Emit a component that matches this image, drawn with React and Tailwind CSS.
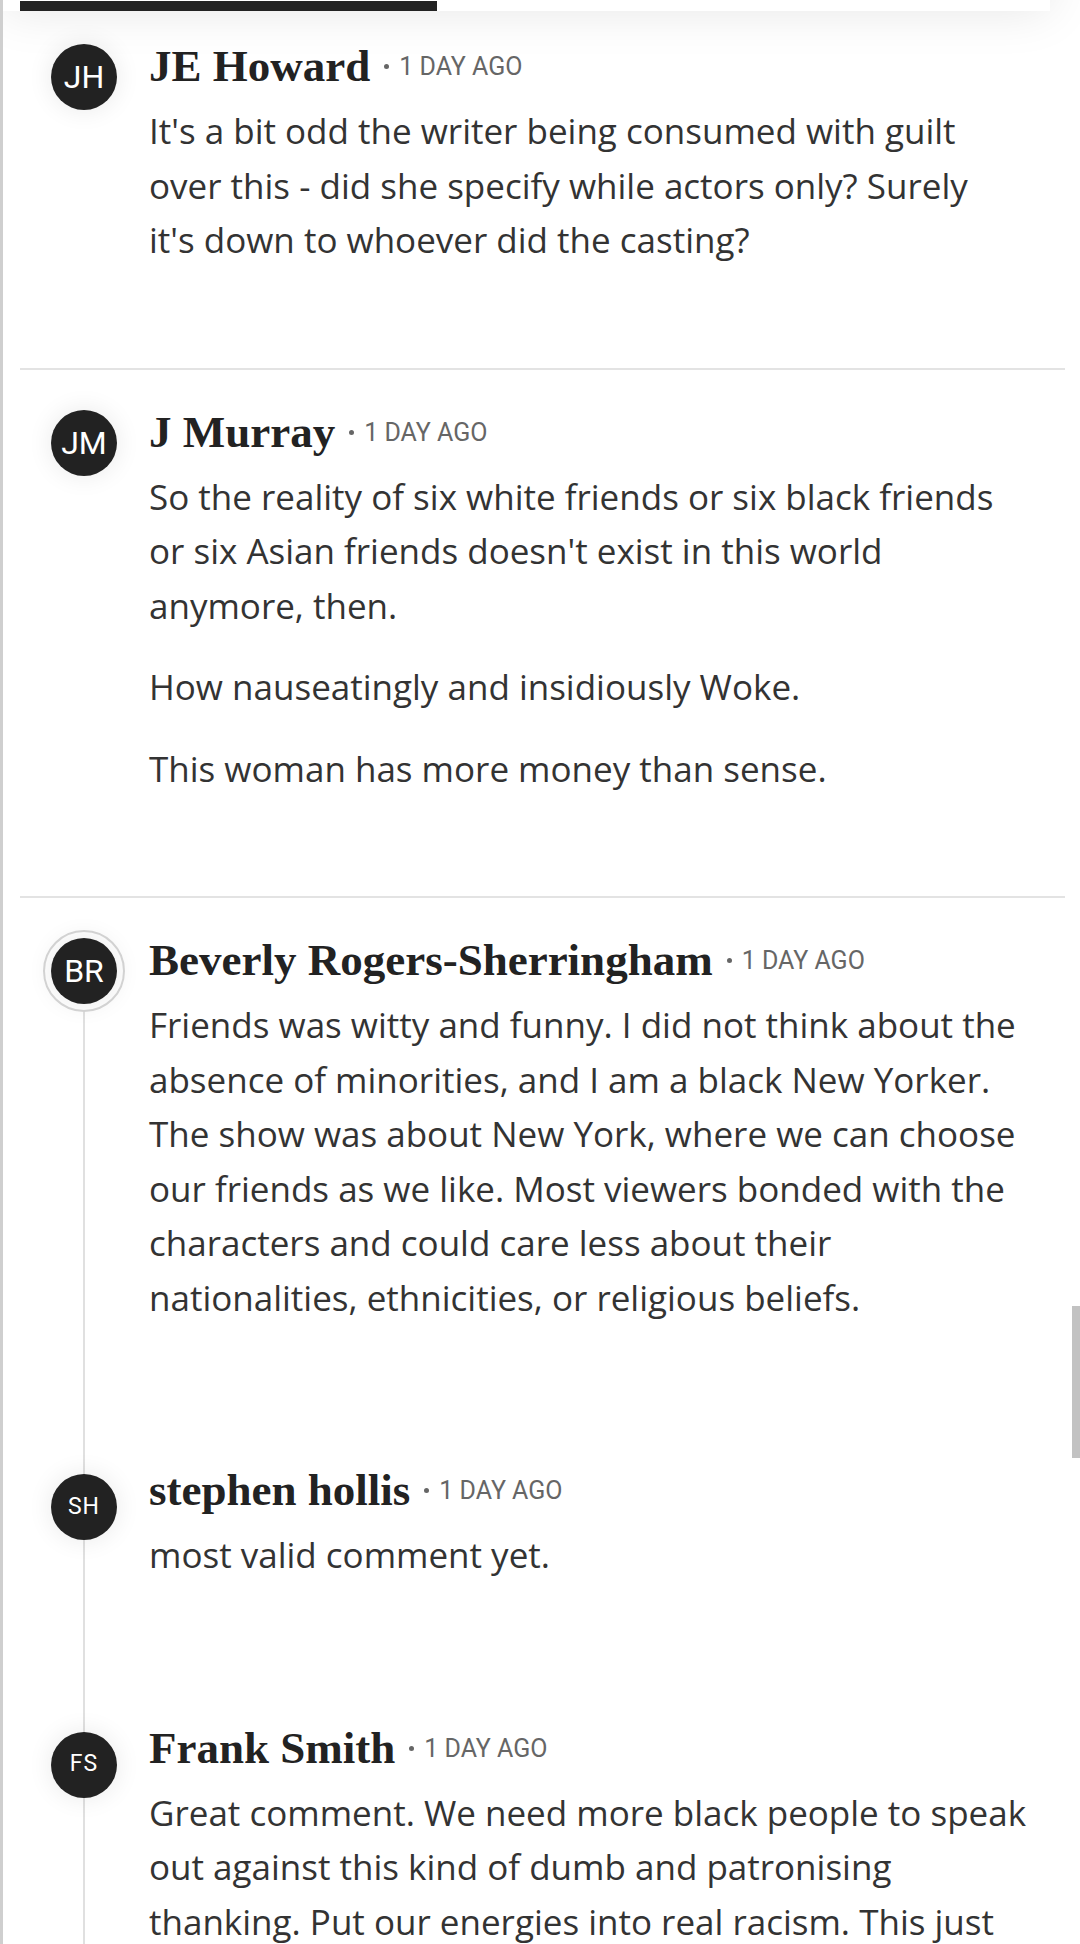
import React from 'react';

const serif = { fontFamily: '"Liberation Serif", "Times New Roman", serif' };

const threads = [
  {
    id: 1,
    initials: 'JH',
    name: 'JE Howard',
    time: '1 day ago',
    body: [
      "It's a bit odd the writer being consumed with guilt over this - did she specify while actors only? Surely\nit's down to whoever did the casting?",
    ],
  },
  {
    id: 2,
    initials: 'JM',
    name: 'J Murray',
    time: '1 day ago',
    body: [
      "So the reality of six white friends or six black friends or six Asian friends doesn't exist in this world anymore, then.",
      'How nauseatingly and insidiously Woke.',
      'This woman has more money than sense.',
    ],
  },
  {
    id: 3,
    initials: 'BR',
    name: 'Beverly Rogers-Sherringham',
    time: '1 day ago',
    body: [
      'Friends was witty and funny. I did not think about the absence of minorities, and I am a black New Yorker. The show was about New York, where we can choose our friends as we like. Most viewers bonded with the characters and could care less about their nationalities, ethnicities, or religious beliefs.',
    ],
    replies: [
      {
        id: 31,
        initials: 'SH',
        name: 'stephen hollis',
        time: '1 day ago',
        body: ['most valid comment yet.'],
      },
      {
        id: 32,
        initials: 'FS',
        name: 'Frank Smith',
        time: '1 day ago',
        body: [
          'Great comment. We need more black people to speak out against this kind of dumb and patronising thanking. Put our energies into real racism. This just plays into the hands of those who want to divide us.',
        ],
      },
    ],
  },
];

function Avatar({ initials, reply, ring }) {
  return (
    <div
      className={
        'relative flex h-[66px] w-[66px] shrink-0 items-center justify-center rounded-full bg-[#222] text-white shadow-[0_0_26px_rgba(0,0,0,0.09)] ' +
        (reply ? 'mt-[10px] text-[23px] tracking-[1px]' : 'mt-[4px] text-[32px]') +
        (ring ? ' outline-2 outline-offset-[6px] outline-[#d2d2d2]' : '')
      }
      style={{ fontFamily: 'Roboto, "Liberation Sans", sans-serif' }}
    >
      {initials}
    </div>
  );
}

function Comment({ c, reply, ring }) {
  return (
    <div className="flex pl-[31px] pr-[35px]">
      <Avatar initials={c.initials} reply={reply} ring={ring} />
      <div className="ml-[32px] min-w-0 flex-1">
        <div className="flex h-[53px] items-center">
          <span className="text-[45px] font-bold leading-[53px] text-[#222]" style={serif}>
            {c.name}
          </span>
          <span className="ml-[14px] h-[5px] w-[5px] rounded-full bg-[#666]" />
          <span
            className="ml-[10px] text-[25px] uppercase leading-[29px] text-[#666]"
            style={{ fontFamily: 'Roboto, "Liberation Sans", sans-serif' }}
          >
            {c.time}
          </span>
        </div>
        <div className="mt-[11px] flex flex-col gap-[27px]">
          {c.body.map((p, i) => (
            <p
              key={i}
              className="whitespace-pre-line text-[35px] leading-[54.5px] text-[#333]"
              style={{ fontFamily: '"Open Sans", "Noto Sans", sans-serif' }}
            >
              {p}
            </p>
          ))}
        </div>
      </div>
    </div>
  );
}

export default function App() {
  return (
    <div className="relative h-[1944px] overflow-hidden border-l-[3px] border-[#cfcfcf] bg-white">
      {/* shadow from the header above */}
      <div className="absolute -top-[60px] left-0 right-[30px] h-[71px] bg-white shadow-[0_0_50px_rgba(0,0,0,0.1)]" />
      <div className="relative ml-[17px] mt-px h-[10px] w-[417px] bg-[#222]" />

      <div className="pl-[17px] pr-[15px]">
        {threads.map((t, idx) => (
          <div
            key={t.id}
            className={
              'relative pb-[100px] ' +
              (idx === 0 ? 'pt-[29px] ' : 'pt-[36px] ') +
              (idx < threads.length - 1 ? 'border-b-2 border-[#e3e3e3]' : '')
            }
          >
            {t.replies && (
              <div className="absolute bottom-0 left-[63px] top-[113px] w-[2px] bg-[#e0e0e0]" />
            )}
            <Comment c={t} ring={!!t.replies} />
            {t.replies &&
              t.replies.map((r) => (
                <div key={r.id} className="mt-[139px]">
                  <Comment c={r} reply />
                </div>
              ))}
          </div>
        ))}
      </div>

      {/* scrollbar thumb */}
      <div className="absolute right-0 top-[1306px] h-[152px] w-[8px] bg-[#c2c2c2]" />
    </div>
  );
}
